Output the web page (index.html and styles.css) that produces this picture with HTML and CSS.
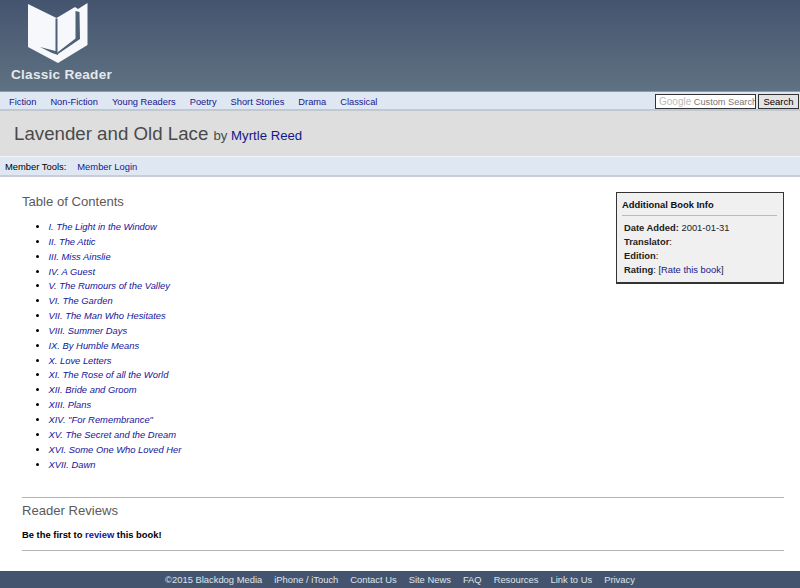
FILE: index.html
```html
<!DOCTYPE html>
<html lang="en">
<head>
<meta charset="utf-8">
<title>Lavender and Old Lace by Myrtle Reed</title>
<link rel="stylesheet" href="styles.css">
</head>
<body>
<header class="masthead">
  <svg class="logo" viewBox="27 3 61 61" width="61" height="61" aria-hidden="true">
    <path fill="#f6f8fb" d="M28 4 L56.5 18 L75 7 L78 9 L87.5 3 V45 L58 63 L28 47 Z"/>
    <path fill="#4f6176" d="M55.5 18.5 L57.5 18.5 V52 L55.5 52 Z"/>
    <path fill="#4f6176" d="M40 47 L55.5 51 L58 52.5 L58 55 L52 53 Z"/>
    <path fill="#4f6176" d="M75.5 11 L79.5 12 L80 39 L58 54 V52 L75.5 38.5 Z"/>
  </svg>
  <div class="brand">Classic Reader</div>
</header>
<nav class="nav">
  <ul class="nav-links">
    <li><a href="#">Fiction</a></li>
    <li><a href="#">Non-Fiction</a></li>
    <li><a href="#">Young Readers</a></li>
    <li><a href="#">Poetry</a></li>
    <li><a href="#">Short Stories</a></li>
    <li><a href="#">Drama</a></li>
    <li><a href="#">Classical</a></li>
  </ul>
  <form class="search">
    <div class="search-input"><span class="g">Google</span> Custom Search</div>
    <button class="search-btn" type="button">Search</button>
  </form>
</nav>
<div class="title-bar">
  <h1 class="title">Lavender and Old Lace <span class="by">by <a href="#">Myrtle Reed</a></span></h1>
</div>
<div class="tools">
  <span>Member Tools:</span><a href="#">Member Login</a>
</div>
<main class="content">
  <div class="columns">
    <section class="toc">
      <h2 class="heading">Table of Contents</h2>
      <ul class="chapters">
        <li><a href="#">I. The Light in the Window</a></li>
        <li><a href="#">II. The Attic</a></li>
        <li><a href="#">III. Miss Ainslie</a></li>
        <li><a href="#">IV. A Guest</a></li>
        <li><a href="#">V. The Rumours of the Valley</a></li>
        <li><a href="#">VI. The Garden</a></li>
        <li><a href="#">VII. The Man Who Hesitates</a></li>
        <li><a href="#">VIII. Summer Days</a></li>
        <li><a href="#">IX. By Humble Means</a></li>
        <li><a href="#">X. Love Letters</a></li>
        <li><a href="#">XI. The Rose of all the World</a></li>
        <li><a href="#">XII. Bride and Groom</a></li>
        <li><a href="#">XIII. Plans</a></li>
        <li><a href="#">XIV. "For Remembrance"</a></li>
        <li><a href="#">XV. The Secret and the Dream</a></li>
        <li><a href="#">XVI. Some One Who Loved Her</a></li>
        <li><a href="#">XVII. Dawn</a></li>
      </ul>
    </section>
    <aside class="info">
      <h3 class="info-title">Additional Book Info</h3>
      <div class="info-rows">
        <div><b>Date Added:</b> 2001-01-31</div>
        <div><b>Translator</b>:</div>
        <div><b>Edition</b>:</div>
        <div><b>Rating</b>: [<a href="#">Rate this book</a>]</div>
      </div>
    </aside>
  </div>
  <section class="reviews">
    <h2 class="heading">Reader Reviews</h2>
    <p class="first"><b>Be the first to <a href="#">review</a> this book!</b></p>
  </section>
</main>
<footer class="footer">
  <span>©2015 Blackdog Media</span>
  <a href="#">iPhone / iTouch</a>
  <a href="#">Contact Us</a>
  <a href="#">Site News</a>
  <a href="#">FAQ</a>
  <a href="#">Resources</a>
  <a href="#">Link to Us</a>
  <a href="#">Privacy</a>
</footer>
</body>
</html>
```
FILE: styles.css
```css
* { box-sizing: border-box; }
html, body { margin: 0; padding: 0; }
body {
  width: 800px;
  height: 588px;
  overflow: hidden;
  background: #fff;
  color: #000;
  font-family: "Liberation Sans", Arial, sans-serif;
  font-size: 10px;
  display: flex;
  flex-direction: column;
}
a { color: #16168c; text-decoration: none; }
.masthead {
  height: 92px;
  flex: none;
  background: linear-gradient(#44546f, #5f7282);
  padding: 3px 0 0 27px;
  border-bottom: 1px solid #8e9aa6;
}
.logo { display: block; }
.brand {
  margin: 3px 0 0 -16px;
  color: #e4e9ee;
  font-size: 13.6px;
  font-weight: bold;
  line-height: 16px;
  letter-spacing: 0.25px;
}
.nav {
  height: 19px;
  flex: none;
  background: #dfe7f2;
  border-bottom: 2px solid #c2c8d0;
  display: flex;
  justify-content: space-between;
  align-items: flex-start;
  padding: 0 1px 0 9px;
  font-size: 9.3px;
}
.nav-links {
  list-style: none;
  margin: 0;
  padding: 1px 0 0;
  display: flex;
  gap: 14px;
  line-height: 19px;
}
.search { display: flex; gap: 2px; padding-top: 2px; }
.search-input {
  width: 101px;
  height: 15px;
  border: 1px solid #333;
  background: #fff;
  color: #777;
  font-size: 9.2px;
  line-height: 14px;
  padding-left: 3px;
  white-space: nowrap;
  overflow: hidden;
}
.g { color: #bbb; font-size: 10px; }
.search-btn {
  width: 41px;
  height: 15px;
  padding: 0;
  border: 1px solid #333;
  background: #e4e4e4;
  color: #000;
  font: 9.5px "Liberation Sans", Arial, sans-serif;
}
.title-bar {
  height: 46px;
  flex: none;
  background: #dedede;
  border-bottom: 1px solid #f2f5f9;
  padding: 0 14px;
}
.title {
  margin: 0;
  font-weight: normal;
  font-size: 18.7px;
  line-height: 45px;
  color: #4a4a4a;
}
.by { font-size: 13.2px; }
.tools {
  height: 20px;
  flex: none;
  background: #dfe7f2;
  border-bottom: 2px solid #c8ccd4;
  display: flex;
  gap: 11px;
  padding-left: 5px;
  font-size: 9.4px;
  line-height: 20px;
}
.content { flex: 1; padding: 16px 16px 0 22px; }
.columns { display: flex; justify-content: space-between; align-items: flex-start; }
.heading {
  margin: 0;
  font-weight: normal;
  font-size: 13.1px;
  line-height: 18px;
  color: #5a5a5a;
}
.chapters {
  margin: 9px 0 0;
  padding: 0 0 0 26.5px;
  font-size: 9.4px;
  font-style: italic;
  line-height: 14.84px;
}
.chapters a { color: #14149a; }
.info {
  width: 168px;
  height: 92px;
  margin-top: -1px;
  background: #f0f0f0;
  border: 1px solid #333;
  border-bottom-width: 2px;
  padding: 5px 6px 0 5px;
}
.info-title {
  margin: 0;
  font-size: 9.4px;
  line-height: 14px;
  padding-bottom: 3px;
  border-bottom: 1px solid #bbb;
  color: #111;
}
.info-rows { padding: 5px 0 0 2px; font-size: 9.4px; line-height: 14px; color: #222; }
.reviews {
  margin-top: 25px;
  border-top: 1px solid #b4b4b4;
  border-bottom: 1px solid #b4b4b4;
  height: 54px;
  padding-top: 4px;
}
.first { margin: 9px 0 0; font-size: 9.4px; line-height: 12px; }
.first a { color: #1414aa; }
.footer {
  height: 17px;
  flex: none;
  background: #44546f;
  color: #dfe4ea;
  display: flex;
  justify-content: center;
  gap: 12px;
  font-size: 9.4px;
  line-height: 18px;
}
.footer a { color: #dfe4ea; }
```
